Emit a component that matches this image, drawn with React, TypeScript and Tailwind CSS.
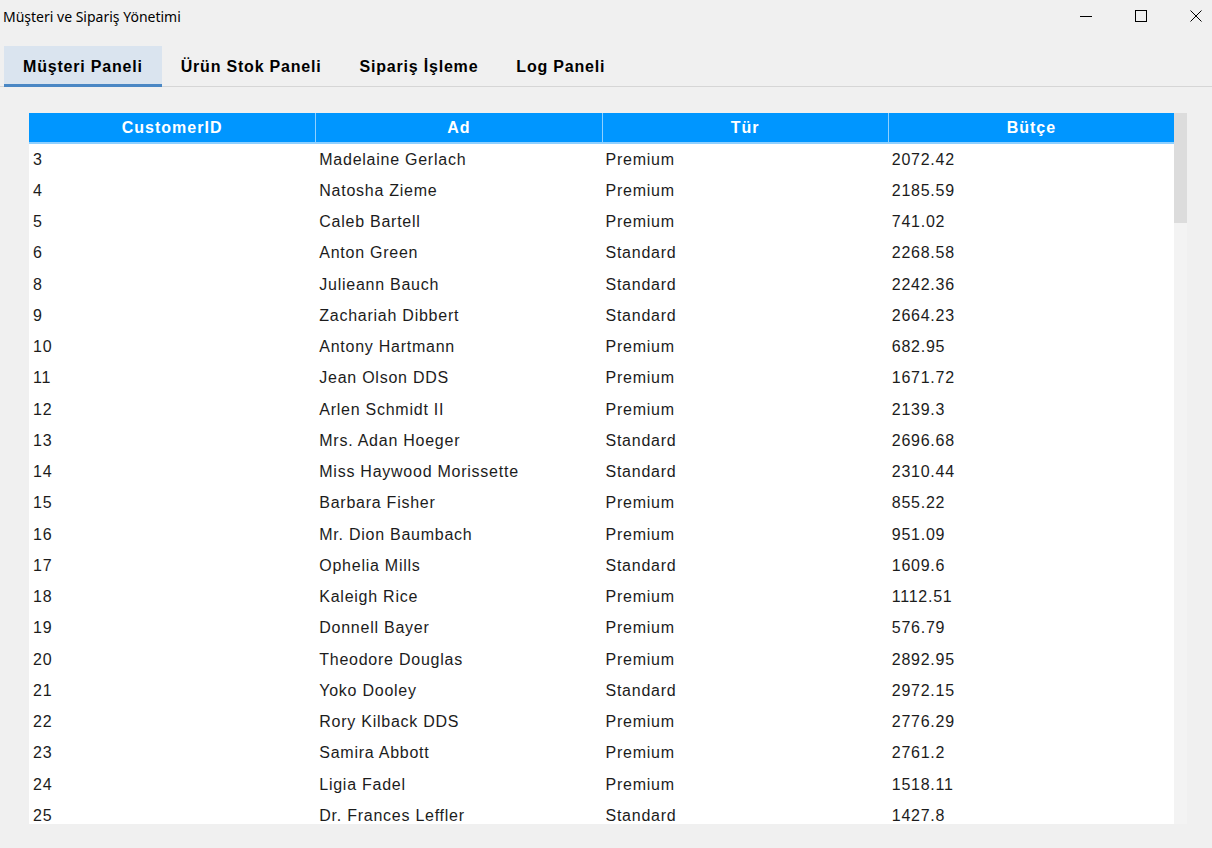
const rows: [string, string, string, string][] = [
  ['3', 'Madelaine Gerlach', 'Premium', '2072.42'],
  ['4', 'Natosha Zieme', 'Premium', '2185.59'],
  ['5', 'Caleb Bartell', 'Premium', '741.02'],
  ['6', 'Anton Green', 'Standard', '2268.58'],
  ['8', 'Julieann Bauch', 'Standard', '2242.36'],
  ['9', 'Zachariah Dibbert', 'Standard', '2664.23'],
  ['10', 'Antony Hartmann', 'Premium', '682.95'],
  ['11', 'Jean Olson DDS', 'Premium', '1671.72'],
  ['12', 'Arlen Schmidt II', 'Premium', '2139.3'],
  ['13', 'Mrs. Adan Hoeger', 'Standard', '2696.68'],
  ['14', 'Miss Haywood Morissette', 'Standard', '2310.44'],
  ['15', 'Barbara Fisher', 'Premium', '855.22'],
  ['16', 'Mr. Dion Baumbach', 'Premium', '951.09'],
  ['17', 'Ophelia Mills', 'Standard', '1609.6'],
  ['18', 'Kaleigh Rice', 'Premium', '1112.51'],
  ['19', 'Donnell Bayer', 'Premium', '576.79'],
  ['20', 'Theodore Douglas', 'Premium', '2892.95'],
  ['21', 'Yoko Dooley', 'Standard', '2972.15'],
  ['22', 'Rory Kilback DDS', 'Premium', '2776.29'],
  ['23', 'Samira Abbott', 'Premium', '2761.2'],
  ['24', 'Ligia Fadel', 'Premium', '1518.11'],
  ['25', 'Dr. Frances Leffler', 'Standard', '1427.8'],
];

const tabs = ['Müşteri Paneli', 'Ürün Stok Paneli', 'Sipariş İşleme', 'Log Paneli'];
const columns = ['CustomerID', 'Ad', 'Tür', 'Bütçe'];

export default function App() {
  return (
    <div className="w-[1212px] h-[848px] bg-[#f0f0f0] flex flex-col overflow-hidden font-['Liberation_Sans',Arial,sans-serif]">
      {/* Title bar */}
      <div className="h-[32px] flex items-center justify-between shrink-0">
        <span className="pl-[3px] text-[14px] text-black font-['Noto_Sans',sans-serif]">
          Müşteri ve Sipariş Yönetimi
        </span>
        <div className="flex items-center h-full pr-[10px] gap-[43px]">
          <svg width="12" height="12" viewBox="0 0 12 12" className="text-black">
            <path d="M0 6.5h12" stroke="currentColor" strokeWidth="1" />
          </svg>
          <svg width="12" height="12" viewBox="0 0 12 12" className="text-black">
            <rect x="0.5" y="0.5" width="11" height="11" fill="none" stroke="currentColor" strokeWidth="1" />
          </svg>
          <svg width="12" height="12" viewBox="0 0 12 12" className="text-black">
            <path d="M0.5 0.5l11 11M11.5 0.5l-11 11" stroke="currentColor" strokeWidth="1" />
          </svg>
        </div>
      </div>

      {/* Tabs */}
      <div className="pt-[14px] shrink-0">
        <div className="flex h-[41px] border-b border-[#d6d6d6] pl-[4px]">
          {tabs.map((t, i) => (
            <div
              key={t}
              className={
                i === 0
                  ? 'px-[19px] flex items-center bg-[#dae4ef] border-b-[3px] border-[#4a87c4] -mb-px text-[16px] font-bold tracking-[0.8px] text-black'
                  : 'px-[19px] flex items-center text-[16px] font-bold tracking-[0.8px] text-black'
              }
            >
              <span className={i === 0 ? 'pt-[4px]' : 'pt-[1px]'}>{t}</span>
            </div>
          ))}
        </div>
      </div>

      {/* Table */}
      <div className="pl-[29px] pt-[26px] flex">
        <div className="w-[1145px] h-[711px] bg-white flex flex-col overflow-hidden">
          <div className="grid grid-cols-4 h-[29px] bg-[#0096ff] border-b-2 border-[#8fd0ff] box-content shrink-0">
            {columns.map((c, i) => (
              <div
                key={c}
                className={
                  i === 0
                    ? 'flex items-center justify-center text-white font-bold text-[16px] tracking-[1px]'
                    : 'flex items-center justify-center text-white font-bold text-[16px] tracking-[1px] border-l border-[#8fd0ff]'
                }
              >
                {c}
              </div>
            ))}
          </div>
          <div className="flex-1 overflow-hidden">
            {rows.map((r) => (
              <div key={r[0]} className="grid grid-cols-4 h-[31.25px] items-center text-[16px] tracking-[0.75px] text-[#1c1c1c]">
                {r.map((v, j) => (
                  <div key={j} className="pl-[4px]">
                    {v}
                  </div>
                ))}
              </div>
            ))}
          </div>
        </div>
        <div className="w-[13px] h-[711px] bg-[#f3f3f3] flex flex-col">
          <div className="h-[110px] bg-[#dcdcdc]" />
        </div>
      </div>
    </div>
  );
}
